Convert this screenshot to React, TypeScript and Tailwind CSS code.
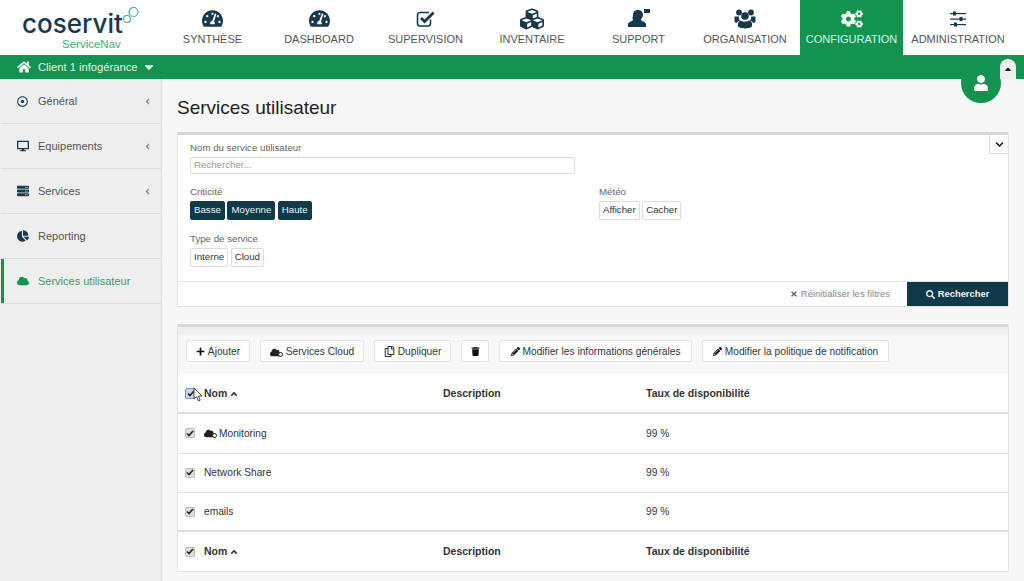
import { type ReactNode } from 'react'
import {
  FaAngleLeft,
  FaAngleUp,
  FaCaretDown,
  FaCaretUp,
  FaChartPie,
  FaChevronDown,
  FaCloud,
  FaCogs,
  FaCubes,
  FaDesktop,
  FaHome,
  FaPencilAlt,
  FaPlus,
  FaRegCopy,
  FaRegDotCircle,
  FaSearch,
  FaServer,
  FaTachometerAlt,
  FaTimes,
  FaTrash,
  FaUser,
} from 'react-icons/fa'

const navItems: { label: string; icon: ReactNode; active?: boolean }[] = [
  { label: 'SYNTHÈSE', icon: <FaTachometerAlt className="size-[21px]" /> },
  { label: 'DASHBOARD', icon: <FaTachometerAlt className="size-[21px]" /> },
  { label: 'SUPERVISION', icon: <CheckIcon /> },
  { label: 'INVENTAIRE', icon: <FaCubes className="size-[24px]" /> },
  { label: 'SUPPORT', icon: <SupportIcon /> },
  { label: 'ORGANISATION', icon: <UsersIcon /> },
  { label: 'CONFIGURATION', icon: <FaCogs className="size-[22px]" />, active: true },
  { label: 'ADMINISTRATION', icon: <SlidersIcon /> },
]

const sideItems: { label: string; icon: ReactNode; arrow?: boolean; active?: boolean }[] = [
  { label: 'Général', icon: <FaRegDotCircle className="size-[11px]" />, arrow: true },
  { label: 'Equipements', icon: <FaDesktop className="size-[12px]" />, arrow: true },
  { label: 'Services', icon: <FaServer className="size-[12px]" />, arrow: true },
  { label: 'Reporting', icon: <FaChartPie className="size-[12px]" /> },
  { label: 'Services utilisateur', icon: <FaCloud className="size-[12px]" />, active: true },
]

function CheckIcon() {
  return (
    <svg width="20" height="18" viewBox="0 0 20 18" fill="none" stroke="#17394a">
      <path d="M14.5 9.5V13.5a2.5 2.5 0 0 1-2.5 2.5H4a2.5 2.5 0 0 1-2.5-2.5V5A2.5 2.5 0 0 1 4 2.5H13" strokeWidth="1.6" />
      <path d="M5 8l3.6 3.6L17.6 2.6" strokeWidth="2.8" />
    </svg>
  )
}

function SupportIcon() {
  return (
    <svg width="22" height="19" viewBox="0 0 22 19" fill="#17394a">
      <path d="M10 1c3 0 5 2 5 4.800 0 2-1 3.400-1.800 4.400-.4.9.2 1.500 1.300 2 2 .8 3.500 1.500 3.500 3.200V18H0v-2.600c0-1.700 1.500-2.400 3.500-3.200 1.100-.5 1.700-1.100 1.300-2C4 9.200 5 7.800 5 5.800 5 3 7 1 10 1z" />
      <rect x="16" y="0" width="6" height="4" />
    </svg>
  )
}

function UsersIcon() {
  return (
    <svg width="22" height="20" viewBox="0 0 22 20" fill="#17394a">
      <circle cx="5" cy="3.500" r="2.900" />
      <circle cx="17" cy="3.500" r="2.900" />
      <circle cx="11" cy="7" r="3.800" />
      <path d="M0.500 7.500h4.300a5 5 0 0 0 1.300 4c-1.800.5-2.800 1.500-3.300 2.600C1.500 13.900.5 13.200.5 12z" />
      <path d="M21.500 7.500h-4.300a5 5 0 0 1-1.300 4c1.800.5 2.800 1.500 3.300 2.600 1.300-.2 2.300-.9 2.300-2.100z" />
      <path d="M7 11.500c1 .8 2.600 1.200 4 1.200s3-.4 4-1.200c2 .3 3 1.700 3 3.600v2c0 1.500-3.500 2.400-7 2.400s-7-.9-7-2.400v-2c0-1.900 1-3.300 3-3.600z" />
    </svg>
  )
}

function SlidersIcon() {
  return (
    <svg width="18" height="16" viewBox="0 0 18 16" fill="#17394a">
      <rect x="1" y="2" width="16" height="1.200" />
      <rect x="1" y="7.500" width="16" height="1.200" />
      <rect x="1" y="13" width="16" height="1.200" />
      <rect x="4" y="0.500" width="3" height="4" />
      <rect x="10.500" y="6" width="3" height="4" />
      <rect x="5" y="11.500" width="3" height="4" />
    </svg>
  )
}

function CloudGear() {
  return (
    <span className="relative inline-block w-[13px] h-[10px] shrink-0">
      <FaCloud className="size-[11px] text-[#222]" />
      <span className="absolute right-0 bottom-0 size-[5px] rounded-full border border-[#222] bg-white" />
    </span>
  )
}

function Logo() {
  return (
    <div className="w-[161px] shrink-0 relative h-full">
      <span className="absolute left-[22px] top-[10px] font-['Inter',sans-serif] font-medium text-[26px] leading-[28px] text-[#17394a]">
        coservit
      </span>
      <svg className="absolute left-[122px] top-[6px]" width="18" height="19" viewBox="0 0 18 19" fill="none" stroke="#3fae75" strokeWidth="1.1">
        <circle cx="11.500" cy="6" r="4.500" />
        <circle cx="5" cy="13" r="3.500" />
      </svg>
      <span className="absolute left-[62px] top-[38px] font-['Liberation_Sans',sans-serif] text-[11.5px] leading-[12px] text-[#3fae75]">
        ServiceNav
      </span>
    </div>
  )
}

function TagButton({ children, dark }: { children: ReactNode; dark?: boolean }) {
  return (
    <span
      className={
        dark
          ? 'h-[19px] px-[3px] flex items-center rounded-[2px] bg-[#10394a] border border-[#10394a] text-[#eef3f5] text-[9.7px] font-medium'
          : 'h-[19px] px-[3px] flex items-center rounded-[2px] bg-white border border-[#ddd] text-[#333] text-[9.7px]'
      }
    >
      {children}
    </span>
  )
}

function ToolButton({ children, width }: { children: ReactNode; width: string }) {
  return (
    <button className={`${width} h-[22px] pt-[1px] flex items-center justify-center gap-[3px] bg-white border border-[#e2e2e2] rounded-[2px] text-[10.2px] text-[#333] whitespace-nowrap`}>
      {children}
    </button>
  )
}

function Check({ focus }: { focus?: boolean }) {
  return (
    <span
      className={
        focus
          ? 'size-[11px] rounded-[2px] border border-[#6f93c9] bg-[#c5d5ea] flex items-center justify-center'
          : 'size-[10px] rounded-[2px] border border-[#bbb] bg-[#dedede] flex items-center justify-center'
      }
    >
      <svg width="8" height="7" viewBox="0 0 8 7" fill="none" stroke="#222" strokeWidth="1.600">
        <path d="M1 3.500l2 2L7 1" />
      </svg>
    </span>
  )
}

function Row({ name, cloud }: { name: string; cloud?: boolean }) {
  return (
    <div className="h-[39.5px] flex items-center border-b border-[#e6e6e6] text-[10.2px] text-[#333]">
      <div className="w-[26px] pl-[7px] shrink-0">
        <Check />
      </div>
      <div className="w-[239px] shrink-0 flex items-center gap-[2px]">
        {cloud && <CloudGear />}
        {name}
      </div>
      <div className="w-[203px] shrink-0" />
      <div>99 %</div>
    </div>
  )
}

function HeadCells() {
  return (
    <>
      <div className="w-[239px] shrink-0 flex items-center gap-[2px]">
        Nom <FaAngleUp className="size-[10px]" />
      </div>
      <div className="w-[203px] shrink-0">Description</div>
      <div>Taux de disponibilité</div>
    </>
  )
}

export default function App() {
  return (
    <div className="relative w-[1024px] h-[581px] overflow-hidden bg-[#f7f7f7] flex flex-col font-['Liberation_Sans',sans-serif]">
      {/* Top nav */}
      <header className="h-[55px] bg-white flex shrink-0">
        <Logo />
        <nav className="flex">
          {navItems.map(item => (
            <div
              key={item.label}
              className={
                item.active
                  ? 'w-[103px] mr-[3.5px] h-full flex flex-col items-center bg-[#12934f] text-white'
                  : 'w-[103px] mr-[3.5px] h-full flex flex-col items-center text-[#17394a]'
              }
            >
              <div className="h-[29px] mt-[4px] flex items-center justify-center">{item.icon}</div>
              <span className={item.active ? 'text-[11px] leading-[12px] text-[#dff3e7] whitespace-nowrap' : 'text-[11px] leading-[12px] text-[#555] whitespace-nowrap'}>
                {item.label}
              </span>
            </div>
          ))}
        </nav>
      </header>

      {/* Client bar */}
      <div className="h-[24px] shrink-0 bg-[#12934f] flex items-center pl-[17px] text-white text-[11.2px]">
        <FaHome className="size-[14px] mr-[7px]" />
        <span className="text-[#e3f3ea]">Client 1 infogérance</span>
        <FaCaretDown className="size-[14px] ml-[4px]" />
      </div>

      <div className="flex flex-1 min-h-0">
        {/* Sidebar */}
        <aside className="w-[162px] shrink-0 bg-[#eeeeee] border-r border-[#e0e0e0] pl-[1px]">
          {sideItems.map(item => (
            <div
              key={item.label}
              className={
                item.active
                  ? 'relative h-[45px] flex items-center border-b border-[#dcdcdc] text-[11px] text-[#3c9a68]'
                  : 'relative h-[45px] flex items-center border-b border-[#dcdcdc] text-[11px] text-[#555]'
              }
            >
              {item.active && <span className="absolute left-0 top-0 bottom-0 w-[3px] bg-[#12934f]" />}
              <span className={item.active ? 'w-[37px] pl-[16px] text-[#12934f]' : 'w-[37px] pl-[16px] text-[#17394a]'}>{item.icon}</span>
              <span className="flex-1">{item.label}</span>
              {item.arrow && <FaAngleLeft className="size-[9px] mr-[9px] text-[#888]" />}
            </div>
          ))}
        </aside>

        {/* Main */}
        <main className="flex-1 min-w-0 pl-[15px] pr-[15px]">
          <h1 className="text-[19px] leading-[22px] text-[#222] mt-[18px] mb-[13px]">Services utilisateur</h1>

          {/* Filters */}
          <section className="relative h-[175px] bg-white border border-[#e2e2e2] border-t-[3px] border-t-[#d5d5d5] rounded-[2px] flex flex-col text-[9.7px] text-[#666]">
            <button className="absolute right-0 top-0 size-[19px] bg-white border-l border-b border-[#ddd] flex items-center justify-center text-[#111]">
              <FaChevronDown className="size-[9px]" />
            </button>
            <div className="flex-1 pl-[12px] pt-[6px]">
              <div className="leading-[14px]">Nom du service utilisateur</div>
              <div className="w-[385px] h-[17px] mt-[2px] border border-[#ddd] rounded-[2px] pl-[3px] flex items-center text-[#999]">Rechercher...</div>
              <div className="flex mt-[11px]">
                <div className="w-[409px]">
                  <div className="leading-[14px]">Criticité</div>
                  <div className="flex gap-[2.5px] mt-[2px]">
                    <TagButton dark>Basse</TagButton>
                    <TagButton dark>Moyenne</TagButton>
                    <TagButton dark>Haute</TagButton>
                  </div>
                  <div className="leading-[14px] mt-[12px]">Type de service</div>
                  <div className="flex gap-[2.5px] mt-[2px]">
                    <TagButton>Interne</TagButton>
                    <TagButton>Cloud</TagButton>
                  </div>
                </div>
                <div>
                  <div className="leading-[14px]">Météo</div>
                  <div className="flex gap-[2.5px] mt-[2px]">
                    <TagButton>Afficher</TagButton>
                    <TagButton>Cacher</TagButton>
                  </div>
                </div>
              </div>
            </div>
            <div className="h-[25px] shrink-0 border-t border-[#e2e2e2] flex justify-end items-stretch">
              <span className="flex items-center gap-[3px] text-[#888] text-[9.5px] mr-[17px]">
                <FaTimes className="size-[8px] text-[#666]" /> Réinitialiser les filtres
              </span>
              <button className="w-[101px] bg-[#10394a] text-[#eef3f5] text-[9.4px] font-bold flex items-center justify-center gap-[3px]">
                <FaSearch className="size-[9px]" /> Rechercher
              </button>
            </div>
          </section>

          {/* Table panel */}
          <section className="mt-[17px] h-[248px] bg-white border border-[#e2e2e2] border-t-[3px] border-t-[#d5d5d5] rounded-[2px]">
            <div className="h-[8px] bg-[#f0f0f0]" />
            <div className="h-[39px] bg-[#f8f8f8] flex items-start pt-[5px] gap-[10px] pl-[8px]">
              <ToolButton width="w-[64px]">
                <FaPlus className="size-[9px] text-[#111]" /> Ajouter
              </ToolButton>
              <ToolButton width="w-[104px]">
                <CloudGear /> Services Cloud
              </ToolButton>
              <ToolButton width="w-[77px]">
                <FaRegCopy className="size-[11px]" /> Dupliquer
              </ToolButton>
              <ToolButton width="w-[28px]">
                <FaTrash className="size-[9px] text-[#111]" />
              </ToolButton>
              <ToolButton width="w-[193px]">
                <FaPencilAlt className="size-[9px] text-[#111]" /> Modifier les informations générales
              </ToolButton>
              <ToolButton width="w-[187px]">
                <FaPencilAlt className="size-[9px] text-[#111]" /> Modifier la politique de notification
              </ToolButton>
            </div>
            <div className="relative h-[40px] pt-[1px] flex items-center border-b-2 border-[#dedede] text-[10.5px] font-bold text-[#333]">
              <div className="w-[26px] pl-[7px] shrink-0">
                <Check focus />
              </div>
              <HeadCells />
              <svg className="absolute left-[15px] top-[13px]" width="10" height="16" viewBox="0 0 10 16">
                <path d="M1 1 L1 12 L3.600 9.600 L5.400 14 L7.200 13.200 L5.400 9 L9 9 Z" fill="#fff" stroke="#333" strokeWidth="0.900" />
              </svg>
            </div>
            <Row name="Monitoring" cloud />
            <Row name="Network Share" />
            <div className="h-[39px] flex items-center border-b-2 border-[#dedede] text-[10.2px] text-[#333]">
              <div className="w-[26px] pl-[7px] shrink-0">
                <Check />
              </div>
              <div className="w-[239px] shrink-0">emails</div>
              <div className="w-[203px] shrink-0" />
              <div>99 %</div>
            </div>
            <div className="h-[38px] pt-[1px] flex items-center text-[10.5px] font-bold text-[#333]">
              <div className="w-[26px] pl-[7px] shrink-0">
                <Check />
              </div>
              <HeadCells />
            </div>
          </section>
        </main>
      </div>

      {/* User badge over the client bar */}
      <div className="absolute left-[961px] top-[63px] size-[40px] rounded-full bg-[#12934f] flex items-center justify-center text-white">
        <FaUser className="size-[16px]" />
      </div>
      <div className="absolute left-[1000px] top-[59px] w-[16px] h-[20px] rounded-t-[8px] bg-[#eeeeee] flex items-center justify-center text-[#111]">
        <FaCaretUp className="size-[10px]" />
      </div>
    </div>
  )
}
